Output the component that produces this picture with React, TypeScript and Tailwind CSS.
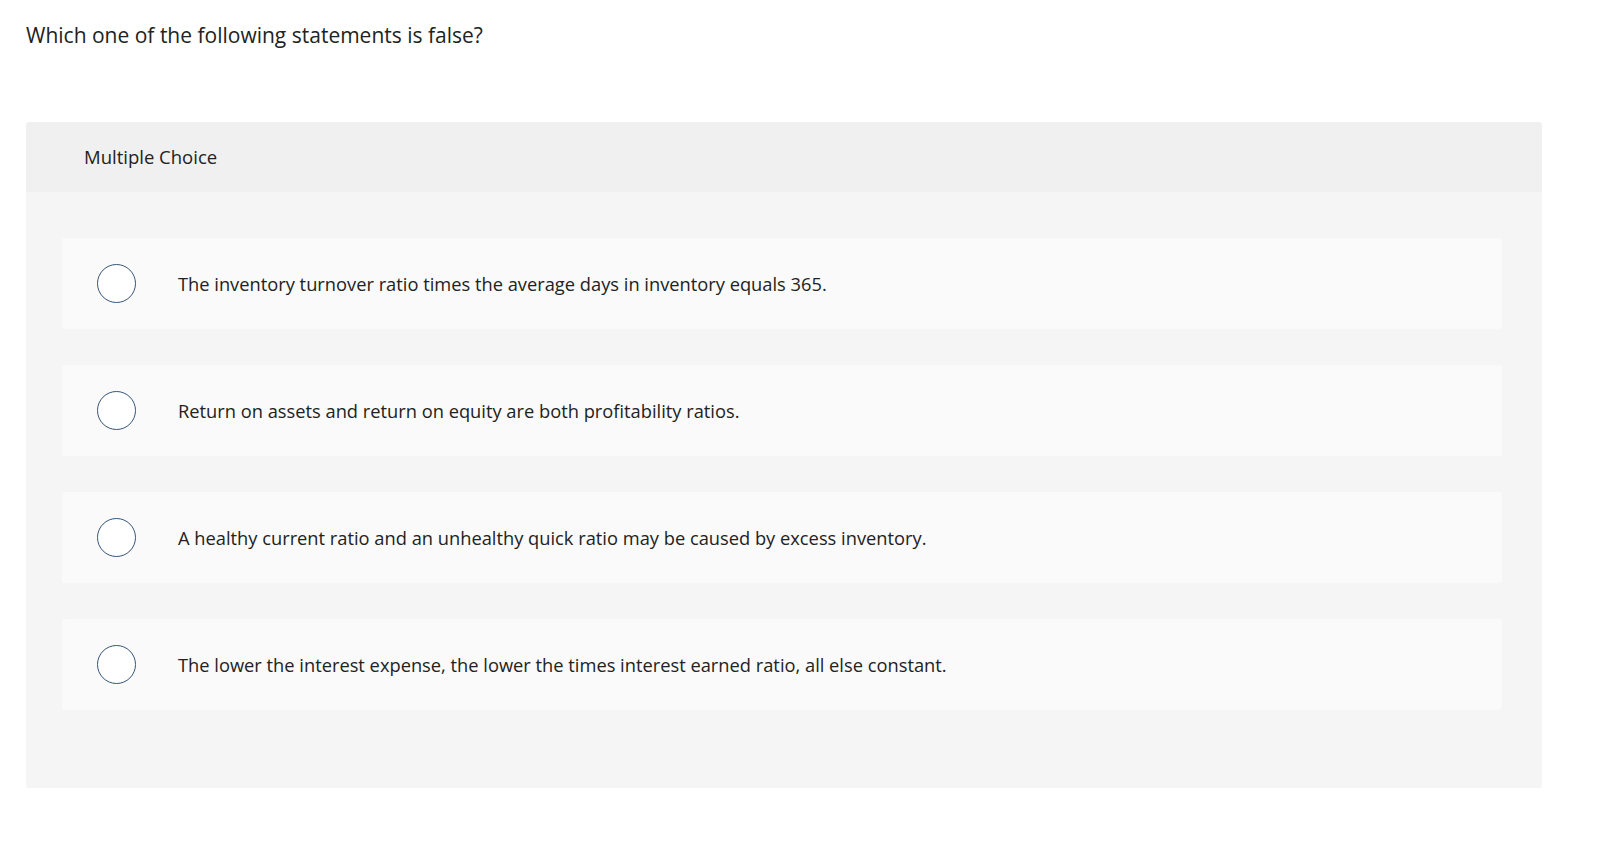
import React from "react";

const options = [
  "The inventory turnover ratio times the average days in inventory equals 365.",
  "Return on assets and return on equity are both profitability ratios.",
  "A healthy current ratio and an unhealthy quick ratio may be caused by excess inventory.",
  "The lower the interest expense, the lower the times interest earned ratio, all else constant.",
];

export default function App() {
  return (
    <div className="min-h-[855px] w-full bg-white text-[#222222]" style={{ fontFamily: '"Open Sans", "Liberation Sans", sans-serif' }}>
      <div className="pl-[26px] pt-[20px]">
        <h1 className="text-[21px] leading-[30px] font-normal">Which one of the following statements is false?</h1>
      </div>
      <div className="ml-[26px] mt-[72px] w-[1516px] rounded-[3px] bg-[#f5f5f5]">
        <div className="flex h-[70px] items-center rounded-t-[3px] bg-[#f0f0f0] pl-[58px] text-[18.5px]">
          Multiple Choice
        </div>
        <div className="flex flex-col gap-[36px] pb-[78px] pl-[36px] pr-[40px] pt-[46px]">
          {options.map((o) => (
            <div key={o} className="flex h-[91px] items-center rounded-[3px] bg-[#fafafa] pl-[35px]">
              <div className="h-[39px] w-[39px] shrink-0 rounded-full border-[1.5px] border-[#34557a] bg-white" />
              <div className="ml-[42px] text-[18.3px]">{o}</div>
            </div>
          ))}
        </div>
      </div>
    </div>
  );
}
